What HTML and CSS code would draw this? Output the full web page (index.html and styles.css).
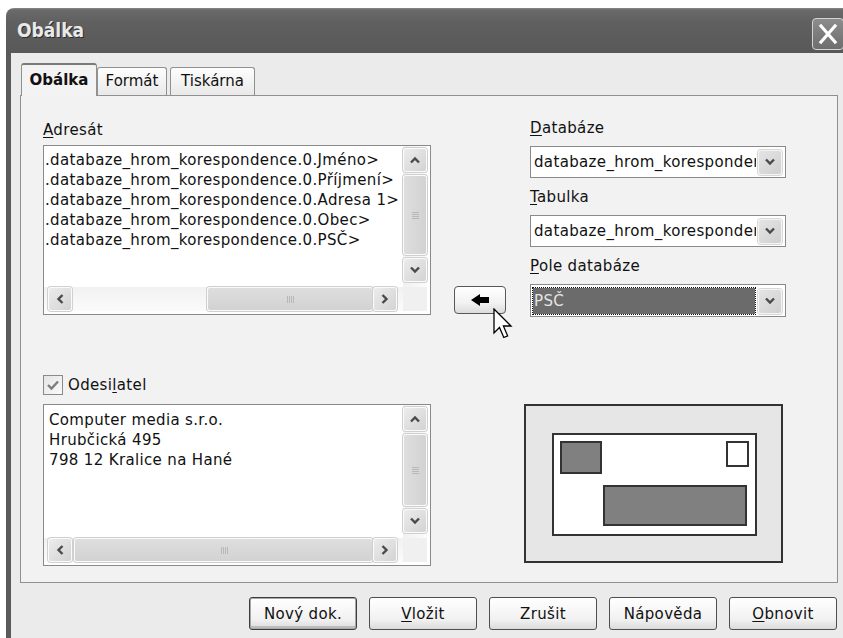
FILE: index.html
```html
<!DOCTYPE html>
<html lang="cs">
<head>
<meta charset="utf-8">
<title>Obálka</title>
<link rel="stylesheet" href="styles.css">
</head>
<body>
<div class="window">
  <div class="titlebar">
    <span class="title">Obálka</span>
    <span class="close">
      <svg width="32" height="32" viewBox="0 0 32 32"><path d="M9 8 L23 24 M23 8 L9 24" stroke="#fff" stroke-width="3.2" stroke-linecap="square"/></svg>
    </span>
  </div>
  <div class="frame">
    <div class="tabs">
      <div class="tab active">Obálka</div>
      <div class="tab tab-format">Formát</div>
      <div class="tab tab-printer">Tiskárna</div>
    </div>
    <div class="panel">
      <div class="col-left">
        <div class="label"><u>A</u>dresát</div>
        <div class="listbox addressee">
          <div class="list-text">
            <div>.databaze_hrom_korespondence.0.Jméno&gt;</div>
            <div>.databaze_hrom_korespondence.0.Příjmení&gt;</div>
            <div>.databaze_hrom_korespondence.0.Adresa 1&gt;</div>
            <div>.databaze_hrom_korespondence.0.Obec&gt;</div>
            <div>.databaze_hrom_korespondence.0.PSČ&gt;</div>
          </div>
          <div class="vscroll">
            <div class="sbtn"><svg width="12" height="8" viewBox="0 0 12 8"><path d="M2 6.5 L6 2.5 L10 6.5" fill="none" stroke="#4a4a4a" stroke-width="2.4"/></svg></div>
            <div class="thumb vthumb"><svg width="9" height="8" viewBox="0 0 9 8"><path d="M1 1.5 H8 M1 3.5 H8 M1 5.5 H8 M1 7.5 H8" stroke="#b8b8b8" stroke-width="1"/></svg></div>
            <div class="sbtn"><svg width="12" height="8" viewBox="0 0 12 8"><path d="M2 1.5 L6 5.5 L10 1.5" fill="none" stroke="#4a4a4a" stroke-width="2.4"/></svg></div>
          </div>
          <div class="hscroll">
            <div class="sbtn"><svg width="8" height="12" viewBox="0 0 8 12"><path d="M6.5 2 L2.5 6 L6.5 10" fill="none" stroke="#4a4a4a" stroke-width="2.4"/></svg></div>
            <div class="track"><div class="thumb hthumb short"><svg width="8" height="9" viewBox="0 0 8 9"><path d="M1.5 1 V8 M3.5 1 V8 M5.5 1 V8 M7.5 1 V8" stroke="#b8b8b8" stroke-width="1"/></svg></div></div>
            <div class="sbtn"><svg width="8" height="12" viewBox="0 0 8 12"><path d="M1.5 2 L5.5 6 L1.5 10" fill="none" stroke="#4a4a4a" stroke-width="2.4"/></svg></div>
          </div>
          <div class="corner"></div>
        </div>

        <label class="check">
          <span class="box"><svg width="18" height="18" viewBox="0 0 18 18"><path d="M4 9 L7.5 12.5 L14 5.5" fill="none" stroke="#7c7c7c" stroke-width="2.4"/></svg></span>
          <span>Odesi<u>l</u>atel</span>
        </label>

        <div class="listbox sender">
          <div class="list-text">
            <div>Computer media s.r.o.</div>
            <div>Hrubčická 495</div>
            <div>798 12 Kralice na Hané</div>
          </div>
          <div class="vscroll">
            <div class="sbtn"><svg width="12" height="8" viewBox="0 0 12 8"><path d="M2 6.5 L6 2.5 L10 6.5" fill="none" stroke="#4a4a4a" stroke-width="2.4"/></svg></div>
            <div class="thumb vthumb"><svg width="9" height="8" viewBox="0 0 9 8"><path d="M1 1.5 H8 M1 3.5 H8 M1 5.5 H8 M1 7.5 H8" stroke="#b8b8b8" stroke-width="1"/></svg></div>
            <div class="sbtn"><svg width="12" height="8" viewBox="0 0 12 8"><path d="M2 1.5 L6 5.5 L10 1.5" fill="none" stroke="#4a4a4a" stroke-width="2.4"/></svg></div>
          </div>
          <div class="hscroll">
            <div class="sbtn"><svg width="8" height="12" viewBox="0 0 8 12"><path d="M6.5 2 L2.5 6 L6.5 10" fill="none" stroke="#4a4a4a" stroke-width="2.4"/></svg></div>
            <div class="track"><div class="thumb hthumb full"><svg width="8" height="9" viewBox="0 0 8 9"><path d="M1.5 1 V8 M3.5 1 V8 M5.5 1 V8 M7.5 1 V8" stroke="#b8b8b8" stroke-width="1"/></svg></div></div>
            <div class="sbtn"><svg width="8" height="12" viewBox="0 0 8 12"><path d="M1.5 2 L5.5 6 L1.5 10" fill="none" stroke="#4a4a4a" stroke-width="2.4"/></svg></div>
          </div>
          <div class="corner"></div>
        </div>
      </div>

      <div class="col-mid">
        <button class="insert-btn" type="button">
          <svg width="52" height="28" viewBox="0 0 52 28"><path d="M17 14 L26 8 L26 11 L35 11 L35 17 L26 17 L26 20 Z" fill="#000"/></svg>
        </button>
      </div>

      <div class="col-right">
        <div class="label"><u>D</u>atabáze</div>
        <div class="combo">
          <span class="combo-text">databaze_hrom_korespondence</span>
          <span class="combo-btn"><svg width="12" height="8" viewBox="0 0 12 8"><path d="M2 1.5 L6 5.5 L10 1.5" fill="none" stroke="#4a4a4a" stroke-width="2.4"/></svg></span>
        </div>
        <div class="label"><u>T</u>abulka</div>
        <div class="combo">
          <span class="combo-text">databaze_hrom_korespondence</span>
          <span class="combo-btn"><svg width="12" height="8" viewBox="0 0 12 8"><path d="M2 1.5 L6 5.5 L10 1.5" fill="none" stroke="#4a4a4a" stroke-width="2.4"/></svg></span>
        </div>
        <div class="label"><u>P</u>ole databáze</div>
        <div class="combo focused">
          <span class="combo-text selected">PSČ</span>
          <span class="combo-btn"><svg width="12" height="8" viewBox="0 0 12 8"><path d="M2 1.5 L6 5.5 L10 1.5" fill="none" stroke="#4a4a4a" stroke-width="2.4"/></svg></span>
        </div>

        <svg class="preview" width="259" height="159" viewBox="0 0 259 159">
          <rect x="1" y="1" width="257" height="157" fill="#e6e6e6" stroke="#333" stroke-width="2"/>
          <rect x="29" y="30" width="203" height="101" fill="#fff" stroke="#333" stroke-width="2"/>
          <rect x="37" y="38" width="40" height="31" fill="#808080" stroke="#333" stroke-width="2"/>
          <rect x="203" y="38" width="21" height="24" fill="#fff" stroke="#333" stroke-width="2"/>
          <rect x="80" y="82" width="142" height="39" fill="#808080" stroke="#333" stroke-width="2"/>
        </svg>
      </div>
    </div>

    <div class="buttons">
      <button class="btn default" type="button">Nový dok.</button>
      <button class="btn" type="button"><u>V</u>ložit</button>
      <button class="btn" type="button">Zrušit</button>
      <button class="btn" type="button">Nápověda</button>
      <button class="btn" type="button"><u>O</u>bnovit</button>
    </div>
  </div>

  <svg class="cursor" width="22" height="34" viewBox="0 0 22 34">
    <path d="M1 1 L1 25 L6.5 19.5 L10.8 29.5 L14.6 27.8 L10.4 18 L18 18 Z" fill="#fff" stroke="#000" stroke-width="1.3" stroke-linejoin="miter"/>
  </svg>
</div>
</body>
</html>
```

FILE: styles.css
```css
* { box-sizing: border-box; }

html, body { margin: 0; }

body {
  width: 843px;
  height: 638px;
  overflow: hidden;
  background: #fff;
  font-family: "DejaVu Sans", sans-serif;
  font-size: 15px;
  letter-spacing: 0.35px;
  color: #111;
}

u { text-decoration-thickness: 1px; text-underline-offset: 2px; }

/* window shell */
.window {
  position: relative;
  margin: 8px 0 0 6px;
  width: 845px;
  height: 640px;
  display: flex;
  flex-direction: column;
}

.titlebar {
  flex: none;
  height: 45px;
  padding-left: 11px;
  display: flex;
  align-items: center;
  justify-content: space-between;
  border-radius: 8px 8px 0 0;
  background: linear-gradient(#8a8a8a 0, #6a6a6a 2px, #606060 30%, #585858 100%);
}

.title {
  color: #e9e9e9;
  font-family: "DejaVu Sans Condensed", "DejaVu Sans", sans-serif;
  font-weight: bold;
  font-size: 19px;
  letter-spacing: 0;
  text-shadow: 1px 1px 0 #2e2e2e;
  margin-top: -1px;
}

.close {
  align-self: flex-start;
  margin: 10px 7px 0 0;
  width: 32px;
  height: 32px;
  border: 1px solid #d4d4d4;
  border-radius: 4px;
  background: linear-gradient(#8c8c8c, #6e6e6e);
  display: flex;
  align-items: center;
  justify-content: center;
}
.close svg { display: block; margin: -1px; }

.frame {
  flex: 1;
  background: #ebebeb;
  border-left: 5px solid #5a5a5a;
  padding: 10px 0 0 9px;
}

/* tabs */
.tabs {
  position: relative;
  z-index: 1;
  height: 33px;
  display: flex;
  align-items: flex-end;
  margin-bottom: -1px;
}

.tab {
  height: 28px;
  margin-bottom: 1px;
  border: 1px solid #909090;
  border-bottom: none;
  border-radius: 3px 3px 0 0;
  background: linear-gradient(#fdfdfd, #e9e9e9);
  text-align: center;
  line-height: 26px;
  color: #111;
  letter-spacing: 0;
}

.tab.active {
  width: 76px;
  height: 33px;
  margin: 0 0 0 1px;
  background: #f3f3f3;
  border-top: 2px solid #7a7a7a;
  font-weight: bold;
  line-height: 30px;
}

.tab-format { width: 70px; }
.tab-printer { width: 85px; margin-left: 3px; }

/* page of the tab */
.panel {
  width: 818px;
  height: 488px;
  border: 1px solid #909090;
  background: #f2f2f2;
  display: flex;
  padding: 24px 0 0 22px;
}

.label { line-height: 20px; height: 20px; }

.col-left {
  width: 388px;
  display: flex;
  flex-direction: column;
}
.col-left > .label { margin-bottom: 5px; }

/* list box with scroll bars */
.listbox {
  border: 1px solid #8a8a8a;
  background: #fff;
  display: grid;
  grid-template-columns: 1fr 24px;
  grid-template-rows: 1fr 24px;
  padding: 0 3px 3px 0;
}
.listbox.addressee { height: 170px; }
.listbox.sender { height: 162px; margin-top: 9px; }

.list-text {
  overflow: hidden;
  white-space: nowrap;
  line-height: 20px;
}
.addressee .list-text { padding: 4px 0 0 1px; }
.sender .list-text { padding: 5px 0 0 5px; }

.vscroll {
  display: flex;
  flex-direction: column;
  gap: 3px;
  padding: 2px 0 5px;
  background: linear-gradient(90deg, #f1f1f1, #fbfbfb);
}

.hscroll {
  display: flex;
  align-items: center;
  padding: 0 6px 0 4px;
  background: linear-gradient(#f1f1f1, #fbfbfb);
}

.track {
  flex: 1;
  height: 24px;
  display: flex;
}

.corner { background: #f0f0f0; }

.sbtn {
  flex: none;
  width: 24px;
  height: 24px;
  border: 1px solid #fafafa;
  border-radius: 3px;
  background: linear-gradient(135deg, #ececec, #d3d3d3);
  box-shadow: 0 0 0 1px #d0d0d0;
  display: flex;
  align-items: center;
  justify-content: center;
}
.sbtn svg { display: block; }

.thumb {
  border: 1px solid #fafafa;
  border-radius: 3px;
  box-shadow: 0 0 0 1px #cfcfcf;
  display: flex;
  align-items: center;
  justify-content: center;
}
.vthumb { flex: 1; background: linear-gradient(90deg, #dedede, #d2d2d2); }
.hthumb { background: linear-gradient(#dedede, #d2d2d2); }
.hthumb.short { width: 166px; margin-left: auto; }
.hthumb.full { flex: 1; margin-left: 2px; }

/* checkbox */
.check {
  margin-top: 60px;
  height: 20px;
  display: flex;
  align-items: center;
  gap: 5px;
  line-height: 20px;
}
.box {
  width: 20px;
  height: 20px;
  border: 1px solid #8a8a8a;
  background: linear-gradient(135deg, #e4e4e4, #fafafa);
  display: flex;
  align-items: center;
  justify-content: center;
}
.box svg { display: block; }

/* middle column: insert button */
.col-mid { padding: 166px 0 0 23px; }

.insert-btn {
  display: block;
  width: 52px;
  height: 28px;
  padding: 0;
  border: 1px solid #585858;
  border-radius: 4px;
  background: linear-gradient(#ffffff, #f2f2f2 60%, #dcdcdc);
}
.insert-btn svg { display: block; margin: -1px; }

/* right column */
.col-right {
  width: 256px;
  margin: -2px 0 0 24px;
  display: flex;
  flex-direction: column;
}
.col-right > .label { margin-bottom: 8px; }

.combo {
  height: 32px;
  margin-bottom: 9px;
  border: 1px solid #8a8a8a;
  background: #fff;
  display: flex;
  align-items: center;
  padding: 2px 3px 2px 0;
}
.combo.focused { height: 33px; padding: 2px 3px 1px 1px; }

.combo-text {
  flex: 1;
  align-self: stretch;
  overflow: hidden;
  white-space: nowrap;
  padding-left: 3px;
  line-height: 26px;
  margin-right: 2px;
}

.combo-text.selected {
  background: #6b6b6b;
  background-clip: padding-box;
  border: 1px dotted #111;
  color: #e4e4e4;
  padding-left: 1px;
  line-height: 27px;
}

.combo-btn {
  flex: none;
  width: 24px;
  height: 25px;
  border: 1px solid #f4f4f4;
  border-radius: 3px;
  background: linear-gradient(135deg, #e4e4e4, #d0d0d0);
  box-shadow: 0 0 0 1px #d8d8d8;
  display: flex;
  align-items: center;
  justify-content: center;
}

.preview {
  display: block;
  margin: 78px 0 0 -6px;
}

/* dialog buttons */
.buttons {
  display: flex;
  justify-content: flex-end;
  gap: 12px;
  margin-top: 14px;
  padding-right: 14px;
}

.btn {
  width: 108px;
  height: 33px;
  padding: 0;
  border: 1px solid #4e4e4e;
  border-radius: 3px;
  background: linear-gradient(#ffffff, #f1f1f1 70%, #dadada);
  font: inherit;
  letter-spacing: inherit;
  color: #111;
}
.btn.default { box-shadow: inset 0 0 0 1px #a8a8a8, inset 0 -2px 0 1px #bdbdbd; border-color: #3c3c3c; }

/* mouse pointer over the insert button */
.cursor {
  position: absolute;
  left: 487px;
  top: 300px;
}
```
